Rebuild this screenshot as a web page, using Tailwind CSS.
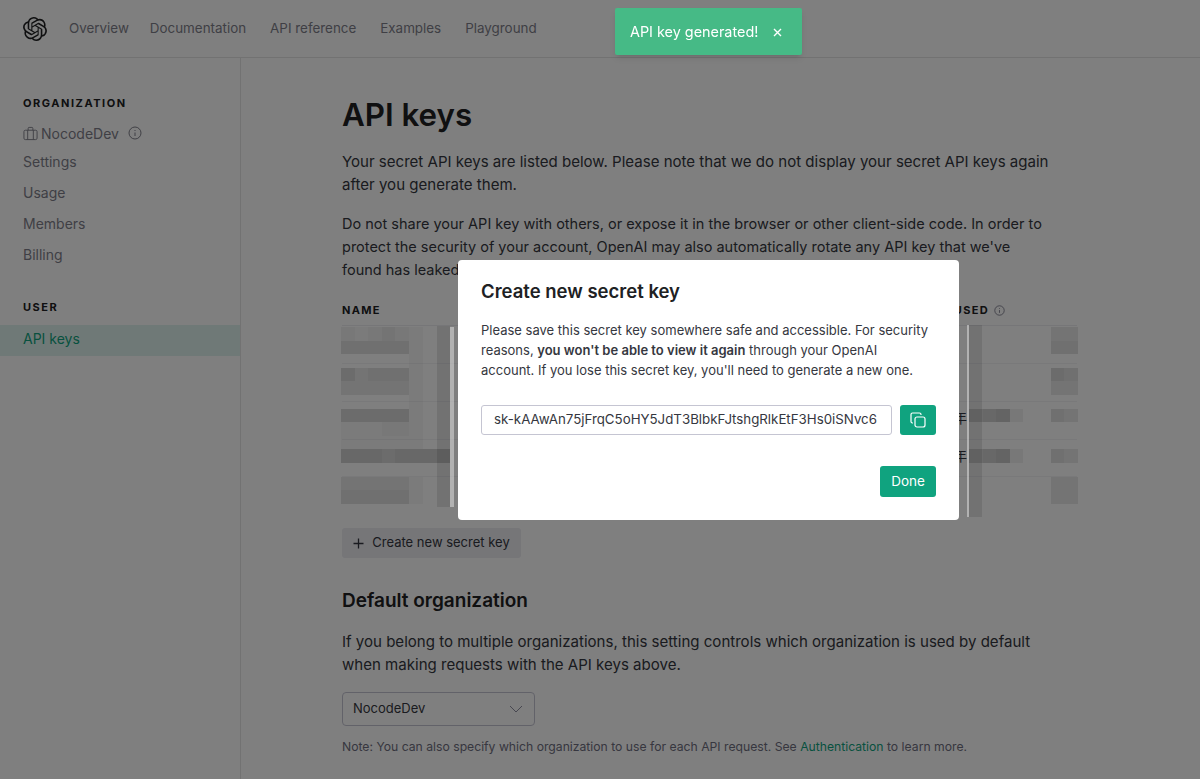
<!DOCTYPE html>
<html lang="en">
<head>
  <meta charset="UTF-8" />
  <title>API keys</title>
  <script src="https://cdn.jsdelivr.net/npm/@tailwindcss/browser@4"></script>
</head>
<body class="h-screen overflow-hidden bg-white font-['Inter','Noto_Sans_CJK_JP',sans-serif] text-[#202123]">

  <!-- Top bar -->
  <header class="flex h-[58px] items-center border-b border-[#e5e5e5] pt-[1px] pl-[23px]">
    <svg class="h-6 w-6 text-[#202123]" viewBox="0 0 24 24" fill="currentColor"><path d="M22.2819 9.8211a5.9847 5.9847 0 0 0-.5157-4.9108 6.0462 6.0462 0 0 0-6.5098-2.9A6.0651 6.0651 0 0 0 4.9807 4.1818a5.9847 5.9847 0 0 0-3.9977 2.9 6.0462 6.0462 0 0 0 .7427 7.0966 5.98 5.98 0 0 0 .511 4.9107 6.051 6.051 0 0 0 6.5146 2.9001A5.9847 5.9847 0 0 0 13.2599 24a6.0557 6.0557 0 0 0 5.7718-4.2058 5.9894 5.9894 0 0 0 3.9977-2.9001 6.0557 6.0557 0 0 0-.7475-7.0729zm-9.022 12.6081a4.4755 4.4755 0 0 1-2.8764-1.0408l.1419-.0804 4.7783-2.7582a.7948.7948 0 0 0 .3927-.6813v-6.7369l2.02 1.1686a.071.071 0 0 1 .038.052v5.5826a4.504 4.504 0 0 1-4.4945 4.4944zm-9.6607-4.1254a4.4708 4.4708 0 0 1-.5346-3.0137l.142.0852 4.783 2.7582a.7712.7712 0 0 0 .7806 0l5.8428-3.3685v2.3324a.0804.0804 0 0 1-.0332.0615L9.74 19.9502a4.4992 4.4992 0 0 1-6.1408-1.6464zM2.3408 7.8956a4.485 4.485 0 0 1 2.3655-1.9728V11.6a.7664.7664 0 0 0 .3879.6765l5.8144 3.3543-2.0201 1.1685a.0757.0757 0 0 1-.071 0l-4.8303-2.7865A4.504 4.504 0 0 1 2.3408 7.872zm16.5963 3.8558L13.1038 8.364 15.1192 7.2a.0757.0757 0 0 1 .071 0l4.8303 2.7913a4.4944 4.4944 0 0 1-.6765 8.1042v-5.6772a.79.79 0 0 0-.407-.667zm2.0107-3.0231l-.142-.0852-4.7735-2.7818a.7759.7759 0 0 0-.7854 0L9.409 9.2297V6.8974a.0662.0662 0 0 1 .0284-.0615l4.8303-2.7866a4.4992 4.4992 0 0 1 6.6802 4.66zM8.3065 12.863l-2.02-1.1638a.0804.0804 0 0 1-.038-.0567V6.0742a4.4992 4.4992 0 0 1 7.3757-3.4537l-.142.0805L8.704 5.459a.7948.7948 0 0 0-.3927.6813zm1.0976-2.3654l2.602-1.4998 2.6069 1.4998v2.9994l-2.5974 1.4997-2.6067-1.4997Z"/></svg>
    <nav class="mt-[-2px] ml-[22px] flex gap-[24px] text-[13.4px] text-[#7f7f8a]">
      <a class="mr-[-3px]">Overview</a>
      <a>Documentation</a>
      <a>API reference</a>
      <a>Examples</a>
      <a>Playground</a>
    </nav>
  </header>

  <div class="flex h-[721px]">
    <!-- Sidebar -->
    <aside class="w-[241px] shrink-0 border-r border-[#e5e5e5] pt-[39px] text-[14px] text-[#7f7f8a]">
      <h2 class="pl-[23px] text-[11px] leading-[13px] font-bold tracking-[0.14em] text-[#202123]">ORGANIZATION</h2>
      <div class="mt-[13px] flex h-[20px] items-center pl-[23px]">
        <svg class="h-[15px] w-[15px]" viewBox="0 0 16 16" fill="none" stroke="currentColor" stroke-width="1"><rect x="1" y="4.5" width="14" height="10" rx="1.5"/><path d="M5.5 4.5V2.5a1 1 0 0 1 1-1h3a1 1 0 0 1 1 1v2M5 4.5v10M11 4.5v10"/></svg>
        <span class="ml-[3px]">NocodeDev</span>
        <svg class="ml-[9px] h-[14px] w-[14px]" viewBox="0 0 14 14" fill="none" stroke="currentColor"><circle cx="7" cy="7" r="6"/><path d="M7 6.5v3.5M7 4v1"/></svg>
      </div>
      <a class="mt-[9px] block pl-[23px] leading-[20px]">Settings</a>
      <a class="mt-[11px] block pl-[23px] leading-[20px]">Usage</a>
      <a class="mt-[11px] block pl-[23px] leading-[20px]">Members</a>
      <a class="mt-[11px] block pl-[23px] leading-[20px]">Billing</a>
      <h2 class="mt-[36px] pl-[23px] text-[11px] leading-[13px] font-bold tracking-[0.14em] text-[#202123]">USER</h2>
      <a class="mt-[11px] block h-[31px] bg-[#dff3ee] pl-[23px] leading-[28px] text-[#10a37f]">API keys</a>
    </aside>

    <!-- Content -->
    <main class="relative ml-[101px] w-[735px] pt-[37px]">
      <h1 class="text-[31.3px] leading-[40px] font-semibold text-[#202123]">API keys</h1>
      <p class="mt-[15px] max-w-[715px] text-[15.05px] leading-[23px] text-[#353740]">Your secret API keys are listed below. Please note that we do not display your secret API keys again after you generate them.</p>
      <p class="mt-[16px] max-w-[705px] text-[14.5px] leading-[23px] text-[#353740]">Do not share your API key with others, or expose it in the browser or other client-side code. In order to protect the security of your account, OpenAI may also automatically rotate any API key that we've found has leaked publicly.</p>

      <!-- Keys table -->
      <div class="relative mt-[14px] h-[217px]">
        <div class="flex h-[31px] items-center justify-between border-b border-[#ececf1] text-[11px] font-bold tracking-[0.12em] text-[#202123]">
          <span>NAME</span>
          <span class="flex items-center gap-[5px] pr-[72px]">LAST USED
            <svg class="h-[11px] w-[11px] text-[#6e6e80]" viewBox="0 0 14 14" fill="none" stroke="currentColor"><circle cx="7" cy="7" r="6"/><path d="M7 6.5v3.5M7 4v1"/></svg>
          </span>
        </div>
        <div class="h-[38px] border-b border-[#f2f2f5]"></div>
        <div class="h-[38px] border-b border-[#f2f2f5]"></div>
        <div class="flex h-[38px] items-center justify-end border-b border-[#f2f2f5] pr-[110px] pb-[6px] text-[14px] text-[#353740]">年</div>
        <div class="flex h-[37px] items-center justify-end border-b border-[#f2f2f5] pr-[110px] pb-[6px] text-[14px] text-[#353740]">年</div>
        <!-- pixelated key values, drawn from the arrays below -->
        <div id="mosaic-name" class="absolute top-[32px] left-[-1px] grid grid-cols-[repeat(8,13.6px)]"></div>
        <div class="absolute top-[31px] left-[95px] h-[181px] w-[13px] bg-black/10"></div>
        <div class="absolute top-[30px] left-[627px] h-[192px] w-[13px] bg-black/10"></div>
        <div id="mosaic-used" class="absolute top-[32px] left-[627px] grid grid-cols-[repeat(8,13.6px)]"></div>
      </div>

      <button class="mt-[16px] flex h-[30px] w-[179px] items-center justify-center gap-[8px] rounded-[3px] bg-[#ececf1] text-[13px] text-[#353740]">
        <svg class="h-[11px] w-[11px]" viewBox="0 0 11 11" stroke="currentColor" stroke-width="1.3"><path d="M5.5 0.5v10M0.5 5.5h10"/></svg>
        Create new secret key
      </button>

      <h2 class="mt-[29px] text-[19px] leading-[28px] font-semibold text-[#202123]">Default organization</h2>
      <p class="mt-[15px] max-w-[700px] text-[15.05px] leading-[23px] text-[#353740]">If you belong to multiple organizations, this setting controls which organization is used by default when making requests with the API keys above.</p>
      <div class="mt-[16px] flex h-[34px] w-[193px] items-center justify-between rounded-[4px] border border-[#c5c5d2] pr-[11px] pl-[10px] text-[13px] text-[#353740]">
        NocodeDev
        <svg class="h-[8px] w-[14px] text-[#8e8ea0]" viewBox="0 0 14 8" fill="none" stroke="currentColor"><path d="M1 1l6 6 6-6"/></svg>
      </div>
      <p class="mt-[13px] text-[12.2px] leading-[16px] text-[#6e6e80]">Note: You can also specify which organization to use for each API request. See <a class="text-[#10a37f]">Authentication</a> to learn more.</p>
    </main>
  </div>

  <!-- Dim layer -->
  <div class="fixed inset-0 bg-black/50"></div>

  <!-- Light edges left around the pixelated columns, brighter than the dimmed page -->
  <div class="fixed top-[327px] left-[450px] h-[180px] w-[4px] bg-white/40"></div>
  <div class="fixed top-[325px] left-[967px] h-[192px] w-[2px] bg-white/40"></div>

  <!-- Modal -->
  <div class="fixed top-[260px] left-[458px] h-[260px] w-[501px] rounded-[4px] bg-white px-[23px] pt-[19px]">
    <h3 class="text-[18.5px] leading-[24px] font-semibold text-[#202123]">Create new secret key</h3>
    <p class="mt-[17px] max-w-[450px] text-[13px] leading-[20px] text-[#353740]">Please save this secret key somewhere safe and accessible. For security reasons, <b class="font-semibold">you won't be able to view it again</b> through your OpenAI account. If you lose this secret key, you'll need to generate a new one.</p>
    <div class="mt-[25px] flex gap-[8px]">
      <div class="flex h-[30px] w-[411px] items-center overflow-hidden rounded-[3px] border border-[#c5c5d2] pl-[12px] text-[13.3px] whitespace-nowrap text-[#353740]">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</div>
      <button class="flex h-[30px] w-[36px] items-center justify-center rounded-[3px] bg-[#10a37f] text-white">
        <svg class="h-[16px] w-[16px]" viewBox="0 0 16 16" fill="none" stroke="currentColor" stroke-width="1.2"><rect x="5" y="5" width="10" height="10" rx="2"/><path d="M11 3V2.5A1.5 1.5 0 0 0 9.5 1h-7A1.5 1.5 0 0 0 1 2.5v7A1.5 1.5 0 0 0 2.5 11H3"/></svg>
      </button>
    </div>
    <div class="mt-[31px] flex justify-end">
      <button class="h-[31px] w-[56px] rounded-[3px] bg-[#10a37f] text-[13.5px] text-white">Done</button>
    </div>
  </div>

  <!-- Toast -->
  <div class="fixed top-[8px] left-[615px] flex h-[47px] w-[187px] items-center rounded-[2px] bg-[#46ba86] pt-[1px] pl-[15px] text-[14.4px] text-white shadow-md">
    API key generated!
    <svg class="ml-[15px] h-[9px] w-[9px]" viewBox="0 0 9 9" stroke="currentColor" stroke-width="1.4"><path d="M1 1l7 7M8 1l-7 7"/></svg>
  </div>

  <script>
    // darkness of each pixel block, 0-9
    const nameCells = [
      '21232100','44444100','00000100','53444100','33333100','00000100','55555100','11122100','11111100','66656666','00000000','33333100','44444100'
    ];
    const usedCells = [
      '00000033','00000044','00000000','00000054','00000033','00000000','56720043','00000000','00000000','56720043','00000000','00000033','00000033'
    ];
    function fill(id, rows) {
      const box = document.getElementById(id);
      rows.forEach(row => {
        [...row].forEach(d => {
          const cell = document.createElement('div');
          cell.className = 'h-[13.6px]';
          cell.style.background = `rgba(0,0,0,${d * 0.03})`;
          box.appendChild(cell);
        });
      });
    }
    fill('mosaic-name', nameCells);
    fill('mosaic-used', usedCells);
  </script>
</body>
</html>
